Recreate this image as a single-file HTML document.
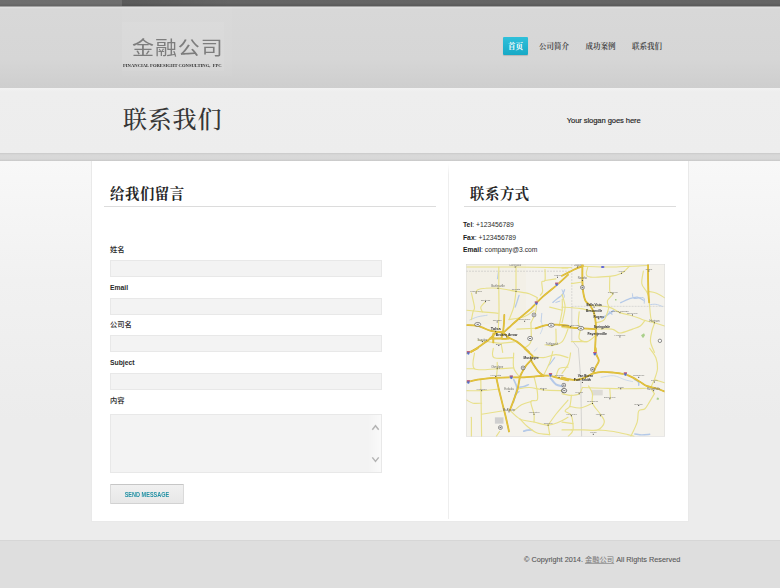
<!DOCTYPE html>
<html lang="zh-CN">
<head>
<meta charset="utf-8">
<title>联系我们 - 金融公司</title>
<style>
*{margin:0;padding:0;box-sizing:border-box;}
html,body{width:780px;height:588px;overflow:hidden;}
body{position:relative;background:#ececec;font-family:"Liberation Sans","Noto Sans CJK SC",sans-serif;color:#222;-webkit-text-size-adjust:none;}
.abs{position:absolute;}
#topbar{left:0;top:0;width:780px;height:7px;background:linear-gradient(#646464 0,#656565 3px,#5d5d5d 5px,#5a5a5a 6px,#9c9c9c 6px,#a8a8a8 7px);}
#topbar2{left:0;top:0;width:122px;height:6px;background:rgba(255,255,255,.07);}
#topbar3{left:122px;top:0;width:110px;height:6px;background:linear-gradient(90deg,rgba(0,0,0,.1),rgba(0,0,0,0));}
#header{left:0;top:7px;width:780px;height:81px;background:linear-gradient(#e1e1e1 0,#d8d8d8 2px,#d6d6d6 52px,#d1d1d1 70px,#cecece 81px);}
#logobox0{left:122px;top:7px;width:110px;height:69px;background:rgba(255,255,255,.035);}
#logobox{left:122px;top:22px;width:101.5px;height:49px;background:rgba(255,255,255,.055);}
#logo{left:132px;top:31px;font-family:"Noto Sans CJK SC","Liberation Sans",sans-serif;font-weight:400;font-size:22px;line-height:30px;color:#7d7d7d;letter-spacing:.9px;white-space:nowrap;transform:scaleY(.86);transform-origin:0 50%;}
#logosub{left:123px;top:62.5px;font-family:"Liberation Serif",serif;font-size:10px;line-height:10px;color:#333;font-weight:700;white-space:nowrap;transform:scale(.462);transform-origin:0 0;letter-spacing:0;}
.nav{top:37px;height:18px;line-height:20px;font-family:"Liberation Serif","Noto Serif CJK SC",serif;font-weight:700;font-size:7.5px;color:#505050;white-space:nowrap;text-align:center;}
#n1{left:503px;width:25px;background:linear-gradient(#2fc0da,#17a9c6);color:#fff;border-radius:1px;box-shadow:0 1px 1px rgba(0,0,0,.15);}
#n2{left:539px;width:30px;}
#n3{left:585px;width:31px;}
#n4{left:632px;width:30px;}
#titleband{left:0;top:88px;width:780px;height:65px;background:linear-gradient(#f2f2f2 0,#eeeeee 4px,#ededed 100%);}
#title{left:123px;top:103.5px;font-family:"Liberation Serif","Noto Serif CJK SC",serif;font-weight:500;font-size:24px;line-height:32px;color:#363636;letter-spacing:.8px;white-space:nowrap;}
#slogan{left:566.8px;top:115.5px;font-size:7.6px;line-height:10px;color:#222;white-space:nowrap;letter-spacing:-.09px;-webkit-text-stroke:.15px #222;}
#strip{left:0;top:153px;width:780px;height:8px;background:linear-gradient(#c9c9c9 0,#d5d5d5 1.5px,#d9d9d9 3px,#d7d7d7 6px,#c8c8c8 8px);}
#main{left:0;top:161px;width:780px;height:379px;background:linear-gradient(#f8f8f8 0,#f1f1f1 120px,#ececec 260px,#ececec 100%);}
#box{left:91px;top:161px;width:598px;height:361px;background:#fff;border:1px solid #e9e9e9;border-top:none;}
#divider{left:448px;top:163px;width:1px;height:356px;background:linear-gradient(#fff 0,#eeeeee 12px,#eeeeee 100%);}
.h2{top:182.4px;font-family:"Liberation Serif","Noto Serif CJK SC",serif;font-weight:700;font-size:14.4px;line-height:24px;color:#262626;letter-spacing:.55px;white-space:nowrap;}
.rule{top:206px;height:1px;background:#dcdcdc;}
.lab{left:110px;font-size:6.8px;line-height:10px;font-weight:700;color:#2a2a2a;white-space:nowrap;}
.lab.cn{font-weight:500;font-size:7.3px;}
.inp{left:110px;width:272px;height:17px;background:#f3f3f3;border:1px solid #e8e8e8;}
#btn{left:110px;top:484px;width:74px;height:20px;border:1px solid #dadada;border-top-color:#c6c6c6;border-bottom-color:#d2d2d2;border-radius:1px;background:linear-gradient(#f0f0f0,#e7e7e7);text-align:center;font-size:7.7px;line-height:19px;font-weight:700;color:#2391a4;white-space:nowrap;}
#btn span{display:inline-block;transform:scaleX(.72);transform-origin:50% 50%;}
.ct{left:463px;font-size:6.75px;line-height:10px;color:#2b2b2b;white-space:nowrap;}
.ct b{color:#1a1a1a;}
#map{left:466px;top:264.1px;width:199px;height:172.5px;filter:blur(.3px);}
#footer{left:0;top:540px;width:780px;height:48px;background:#dedede;border-top:1px solid #d6d6d6;}
#copy{left:524px;top:554.8px;font-size:7.3px;line-height:10px;color:#595959;white-space:nowrap;-webkit-text-stroke:.1px #595959;}
</style>
</head>
<body>
<div id="topbar" class="abs"></div><div id="topbar2" class="abs"></div><div id="topbar3" class="abs"></div>
<div id="header" class="abs"></div>
<div id="logobox0" class="abs"></div><div id="logobox" class="abs"></div>
<div id="logo" class="abs">金融公司</div>
<div id="logosub" class="abs">FINANCIAL FORESIGHT CONSULTING, &nbsp;FPC</div>
<div id="n1" class="abs nav">首页</div>
<div id="n2" class="abs nav">公司简介</div>
<div id="n3" class="abs nav">成功案例</div>
<div id="n4" class="abs nav">联系我们</div>

<div id="titleband" class="abs"></div>
<div id="title" class="abs">联系我们</div>
<div id="slogan" class="abs">Your slogan goes here</div>
<div id="strip" class="abs"></div>

<div id="main" class="abs"></div>
<div id="box" class="abs"></div>
<div id="divider" class="abs"></div>

<div class="abs h2" style="left:110px">给我们留言</div>
<div class="abs rule" style="left:104px;width:332px"></div>

<div class="abs lab cn" style="top:245px">姓名</div>
<div class="abs inp" style="top:260px"></div>
<div class="abs lab" style="top:283px">Email</div>
<div class="abs inp" style="top:298px"></div>
<div class="abs lab cn" style="top:320px">公司名</div>
<div class="abs inp" style="top:335px"></div>
<div class="abs lab" style="top:358px">Subject</div>
<div class="abs inp" style="top:373px"></div>
<div class="abs lab cn" style="top:396px">内容</div>
<div class="abs inp" style="top:414px;height:59px"></div>
<div class="abs" style="left:368px;top:415px;width:13px;height:57px;background:linear-gradient(90deg,rgba(255,255,255,0),rgba(255,255,255,.55))"></div>
<svg class="abs" style="left:371px;top:423px" width="10" height="42" viewBox="0 0 10 42"><path d="M1.3 6.8 L4.5 2.8 L7.7 6.8" fill="none" stroke="#b4b4b4" stroke-width="1.5" stroke-linejoin="miter"/><path d="M1.3 34.4 L4.5 38.4 L7.7 34.4" fill="none" stroke="#b4b4b4" stroke-width="1.5"/></svg>
<div id="btn" class="abs"><span>SEND MESSAGE</span></div>

<div class="abs h2" style="left:470px">联系方式</div>
<div class="abs rule" style="left:464px;width:212px"></div>
<div class="abs ct" style="top:220.4px"><b>Tel</b>: +123456789</div>
<div class="abs ct" style="top:232.8px"><b>Fax</b>: +123456789</div>
<div class="abs ct" style="top:244.8px"><b>Email</b>: company@3.com</div>

<svg id="map" class="abs" viewBox="466 264 199 172" preserveAspectRatio="none">
<rect x="466" y="264" width="199" height="172" fill="#f4f2ec"/>
<rect x="466" y="264" width="60" height="60" fill="#f1efe4" opacity=".6"/>
<rect x="494.9" y="416.9" width="8.6" height="6.3" fill="#cfcfcf"/>
<rect x="591.7" y="389.5" width="11" height="5.5" fill="#dddbd6"/>
<path d="M641 335 l3 -2 l1 2 l-2 3z M657 397 l2 .5 l-.5 2 l-2 -.5z M615 299 l1.5 0 l0 1.5 l-1.5 0z" fill="#a9d08a"/>
<path d="M466 271.2 H572" stroke="#b9b9b9" stroke-width=".5" stroke-dasharray="2 1" fill="none"/>
<path d="M571.8 264 V306.2 H665" stroke="#bdbdbd" stroke-width=".5" stroke-dasharray="2 1" fill="none"/>
<path d="M571.8 306 L571.8 340 L578.4 348 L580.8 379 L581.6 436" stroke="#b5b5b5" stroke-width=".5" fill="none"/>
<g fill="none" stroke="#b4c9e8" stroke-linecap="round" stroke-linejoin="round">
<path d="M519.1 295.2 C518.8 296.2 517.8 299.5 517.1 301.5 C516.5 303.5 515.5 306.1 515.2 307.0" stroke-width="1.28"/>
<path d="M498.3 272.5 L497.4 278.8" stroke-width="0.96"/>
<path d="M552.8 302.3 C553.6 301.6 555.9 299.6 557.5 298.4 C559.1 297.1 561.0 296.2 562.2 294.8 C563.4 293.4 564.2 290.6 564.6 289.7" stroke-width="1.28"/>
<path d="M555.9 302.3 L559.9 301.0" stroke-width="0.96"/>
<path d="M541.8 313.2 L541.1 321.1" stroke-width="0.80"/>
<path d="M469.8 319.8 C471.1 319.3 474.8 317.5 477.7 316.7 C480.6 315.9 485.5 315.4 487.1 315.1" stroke-width="0.72"/>
<path d="M601.9 318.2 C602.8 317.6 605.4 315.8 607.4 314.5 C609.4 313.2 612.7 311.1 613.7 310.4" stroke-width="1.76"/>
<path d="M609.0 311.7 L612.1 314.0" stroke-width="1.20"/>
<path d="M620.7 302.6 C622.1 302.0 626.5 299.6 629.3 298.7 C632.0 297.8 634.9 296.8 637.2 297.0 C639.6 297.2 642.4 299.6 643.4 300.1" stroke-width="1.28"/>
<path d="M632.5 293.7 C632.8 294.5 632.2 297.8 634.0 298.4 C635.8 299.0 641.7 296.8 643.4 297.6 C645.1 298.4 644.1 302.2 644.2 303.1" stroke-width="0.96"/>
<path d="M649.7 304.6 C650.7 304.5 653.8 303.9 655.9 304.2 C658.0 304.5 661.2 305.9 662.2 306.3" stroke-width="0.80"/>
<path d="M562.0 289.7 C562.4 290.8 564.2 294.4 564.3 296.0 C564.4 297.6 563.0 298.6 562.8 299.1" stroke-width="0.96"/>
<path d="M513.7 379.3 C514.2 380.6 516.5 384.5 516.8 387.1 C517.0 389.7 515.8 392.5 515.2 395.0 C514.6 397.5 513.7 400.8 513.4 402.0" stroke-width="1.60"/>
<path d="M516.8 387.1 C517.8 387.0 521.1 386.9 523.1 386.4 C525.1 385.9 527.6 384.6 528.5 384.3" stroke-width="1.44"/>
<path d="M514.5 395.0 L519.1 391.1" stroke-width="1.12"/>
<path d="M550.5 377.7 C551.4 378.8 553.9 382.6 555.9 384.0 C557.9 385.4 561.2 385.6 562.2 385.9" stroke-width="1.92"/>
<path d="M554.7 357.4 C554.1 358.2 552.2 360.8 551.2 362.1 C550.2 363.5 548.9 364.9 548.4 365.5" stroke-width="1.04"/>
<path d="M523.8 430.7 C524.5 430.5 526.5 429.9 527.8 429.7 C529.1 429.5 531.1 429.4 531.7 429.4" stroke-width="1.76"/>
<path d="M634.3 379.0 C635.0 379.4 637.7 380.7 638.4 381.7 C639.1 382.7 638.7 384.4 638.7 385.0" stroke-width="1.44"/>
<path d="M634.8 433.5 C636.0 433.6 639.3 434.3 641.8 434.4 C644.3 434.4 648.4 433.9 649.7 433.8" stroke-width="1.44"/>
<path d="M601.1 377.0 C603.2 376.7 609.8 375.0 613.7 375.4 C617.6 375.8 621.5 378.3 624.6 379.3 C627.7 380.3 631.2 380.9 632.5 381.2" stroke-width=".6"/>
<path d="M534.0 351.1 L537.2 348.0" stroke-width=".6"/>
<path d="M541.1 321.1 C541.4 322.1 542.7 325.2 542.6 327.3 C542.5 329.4 540.7 332.6 540.3 333.6" stroke-width=".6"/>
</g>
<g fill="none" stroke="#e8e08a" stroke-width="1.15" stroke-linecap="round" stroke-linejoin="round">
<path d="M466.7 267.0 C474.8 267.0 498.3 266.9 515.2 267.0 C532.1 267.1 559.2 267.7 568.0 267.8"/>
<path d="M562.0 267.8 L571.4 267.5"/>
<path d="M498.8 267.0 C498.8 270.5 498.8 280.8 498.8 288.2 C498.8 295.6 499.1 304.9 499.0 311.7 C498.9 318.5 498.4 326.0 498.3 328.9"/>
<path d="M516.0 267.0 L516.0 291.3"/>
<path d="M476.1 292.9 C476.4 292.4 476.1 290.5 477.7 289.7 C479.3 288.9 482.1 288.4 485.5 288.2 C488.9 287.9 492.9 287.7 498.0 288.2 C503.1 288.7 510.8 290.4 516.0 291.3 C521.2 292.2 525.8 292.6 529.3 293.7 C532.8 294.8 535.9 297.0 537.2 297.6"/>
<path d="M516.0 291.3 C515.6 293.9 514.9 302.3 513.7 307.0 C512.5 311.7 509.8 317.4 509.0 319.5"/>
<path d="M471.4 292.9 C471.9 295.2 474.2 303.9 474.5 307.0 C474.8 310.1 473.5 309.6 473.0 311.7 C472.5 313.8 471.7 318.2 471.4 319.5"/>
<path d="M466.7 310.1 C469.3 310.4 477.2 311.2 482.4 311.7 C487.6 312.2 495.4 312.9 498.0 313.2"/>
<path d="M485.5 301.5 C484.7 302.4 481.3 305.3 480.8 307.0 C480.3 308.7 482.1 310.9 482.4 311.7"/>
<path d="M545.0 269.4 C545.0 271.2 545.5 278.3 545.0 280.4 C544.5 282.5 542.2 280.1 541.8 281.9 C541.4 283.7 542.9 289.1 542.6 291.3 C542.4 293.5 540.7 294.6 540.3 295.2"/>
<path d="M545.0 280.4 L555.9 278.8"/>
<path d="M562.2 299.1 C562.2 300.9 562.7 305.7 562.2 310.1 C561.7 314.6 559.6 323.2 559.1 325.8"/>
<path d="M530.9 322.6 C530.9 325.7 531.9 337.2 530.9 341.4 C529.9 345.6 525.6 346.6 524.6 347.7"/>
<path d="M555.9 328.9 C555.9 331.2 556.5 340.3 555.9 343.0 C555.2 345.7 552.6 344.9 552.0 345.3"/>
<path d="M516.8 328.9 L535.6 328.1"/>
<path d="M509.0 319.5 C511.6 319.0 520.4 318.0 524.6 316.4 C528.8 314.8 532.4 311.2 534.0 310.1"/>
<path d="M549.7 307.0 L562.2 310.1"/>
<path d="M477.7 339.8 C480.3 340.2 489.4 341.7 493.3 342.2 C497.2 342.7 497.5 343.1 501.1 343.0 C504.8 342.9 512.9 341.7 515.2 341.4"/>
<path d="M501.1 343.0 L502.7 352.1"/>
<path d="M545.0 344.5 C546.2 344.6 549.1 345.8 552.0 345.3 C554.9 344.8 559.5 344.1 562.2 341.4 C564.9 338.7 567.0 331.0 568.0 328.9"/>
<path d="M537.2 297.6 C536.9 300.0 536.7 307.5 535.6 311.7 C534.5 315.9 531.7 320.8 530.9 322.6"/>
<path d="M582.4 266.3 C586.8 266.4 601.2 267.0 609.0 267.0 C616.8 267.0 622.8 266.6 629.3 266.3 C635.8 266.1 645.0 265.6 648.1 265.5"/>
<path d="M587.8 267.0 C587.8 268.6 584.1 274.8 587.8 276.4 C591.5 278.0 604.2 276.9 609.8 276.4 C615.4 275.9 618.2 275.0 621.5 273.3 C624.8 271.6 628.0 267.5 629.3 266.3"/>
<path d="M609.8 276.4 C609.8 278.9 609.3 288.4 609.8 291.3 C610.3 294.2 613.3 292.1 612.9 293.7 C612.5 295.3 608.0 298.5 607.4 300.7 C606.8 302.9 608.7 305.9 609.0 307.0"/>
<path d="M571.4 283.5 L582.4 281.9"/>
<path d="M562.0 307.0 C565.1 307.2 575.3 307.7 580.8 308.5 C586.3 309.3 592.5 311.2 594.9 311.7"/>
<path d="M590.2 305.4 C593.3 305.7 604.0 305.8 609.0 307.0 C614.0 308.2 616.5 311.2 619.9 312.5 C623.3 313.8 626.2 313.9 629.3 314.8 C632.4 315.7 636.1 317.0 638.7 317.9 C641.3 318.8 642.4 319.5 645.0 320.3 C647.6 321.1 652.8 322.2 654.4 322.6"/>
<path d="M595.7 322.6 C597.1 322.1 602.1 322.1 604.3 319.5 C606.5 316.9 608.2 309.1 609.0 307.0"/>
<path d="M595.7 328.9 C598.4 328.9 608.1 328.2 612.1 328.9 C616.1 329.5 616.5 332.8 619.9 332.8 C623.3 332.8 629.1 330.1 632.5 328.9 C635.9 327.7 638.2 327.2 640.3 325.8 C642.4 324.4 644.2 321.2 645.0 320.3"/>
<path d="M649.2 302.3 C649.3 303.1 649.4 304.1 649.7 307.0 C650.0 309.9 650.4 316.9 651.2 319.5 C652.0 322.1 654.3 320.8 654.4 322.6 C654.5 324.4 652.6 327.4 652.0 330.5 C651.4 333.6 650.1 337.8 650.5 341.4 C650.9 345.0 653.8 350.3 654.4 352.1"/>
<path d="M643.4 271.0 C643.1 273.1 641.3 280.1 641.8 283.5 C642.3 286.9 645.4 289.2 646.5 291.3 C647.6 293.4 648.2 295.2 648.6 296.0"/>
<path d="M648.1 291.3 C649.4 291.6 653.1 291.8 655.9 292.9 C658.6 293.9 663.1 296.8 664.6 297.6"/>
<path d="M654.4 322.6 L664.6 325.8"/>
<path d="M562.0 327.3 C563.6 327.4 568.3 328.0 571.4 328.1 C574.5 328.2 579.2 328.1 580.8 328.1"/>
<path d="M579.2 311.7 C579.1 313.5 578.1 319.9 578.4 322.6 C578.7 325.3 580.4 327.2 580.8 328.1"/>
<path d="M580.8 328.1 C580.5 329.8 578.2 336.1 579.2 338.3 C580.2 340.5 584.4 341.9 587.1 341.4 C589.9 340.9 594.3 336.2 595.7 335.2"/>
<path d="M571.4 341.4 L587.1 341.4"/>
<path d="M562.0 294.4 C562.5 296.5 565.1 302.3 565.1 307.0 C565.1 311.7 562.5 320.0 562.0 322.6"/>
<path d="M474.5 352.7 C474.5 355.3 470.7 365.8 474.5 368.4 C478.3 371.0 490.7 368.5 497.2 368.4 C503.7 368.3 511.0 367.7 513.7 367.6"/>
<path d="M497.2 362.1 C497.2 363.2 497.3 365.8 497.2 368.4 C497.1 371.0 496.5 376.1 496.4 377.7"/>
<path d="M466.7 368.4 L474.5 368.4"/>
<path d="M480.8 379.3 L481.6 435.7"/>
<path d="M466.7 390.3 C469.2 390.3 476.2 390.6 481.6 390.3 C487.0 390.0 495.9 389.0 498.8 388.7"/>
<path d="M466.7 399.7 C467.8 400.2 470.5 402.3 473.0 402.8 C475.5 403.3 480.2 402.8 481.6 402.8"/>
<path d="M471.4 416.9 L471.4 435.7"/>
<path d="M481.6 413.8 L501.9 410.6"/>
<path d="M513.7 352.7 C513.7 355.2 512.7 363.6 513.7 367.6 C514.7 371.7 518.9 375.4 519.9 377.0"/>
<path d="M493.3 348.0 C493.4 349.6 490.7 355.8 494.1 357.4 C497.5 359.0 510.4 357.4 513.7 357.4"/>
<path d="M509.8 409.8 C511.5 411.2 515.9 416.5 519.9 418.5 C523.9 420.5 529.3 420.6 534.0 421.6 C538.7 422.6 543.9 424.7 548.1 424.7 C552.3 424.7 555.8 422.9 559.1 421.6 C562.4 420.3 566.5 417.7 568.0 416.9"/>
<path d="M519.9 418.5 C521.2 419.8 524.9 424.0 527.8 426.3 C530.7 428.6 533.6 431.2 537.2 432.5 C540.9 433.8 547.6 433.8 549.7 434.1"/>
<path d="M534.0 376.2 C534.5 378.6 536.7 386.4 537.2 390.3 C537.7 394.2 538.2 397.9 537.2 399.7 C536.2 401.5 531.4 398.8 530.9 401.2 C530.4 403.6 533.5 410.4 534.0 413.8 C534.5 417.2 534.0 420.3 534.0 421.6"/>
<path d="M517.6 388.7 C519.5 388.4 525.0 387.0 529.3 387.1 C533.6 387.2 537.9 389.0 543.4 389.5 C548.9 390.0 559.1 390.2 562.2 390.3"/>
<path d="M530.9 401.2 C529.3 401.7 524.4 402.8 521.5 404.4 C518.6 406.0 515.0 409.6 513.7 410.6"/>
<path d="M552.8 351.1 C552.3 352.9 551.3 358.1 549.7 362.1 C548.1 366.2 544.5 373.2 543.4 375.4"/>
<path d="M532.5 355.8 C534.3 356.1 539.5 357.6 543.4 357.4 C547.3 357.1 551.8 354.3 555.9 354.3 C560.0 354.3 566.0 356.9 568.0 357.4"/>
<path d="M555.9 377.0 C556.4 375.6 557.1 370.1 559.1 368.4 C561.1 366.7 566.5 367.1 568.0 366.8"/>
<path d="M548.1 424.7 L549.7 434.1"/>
<path d="M499.6 431.0 L496.4 435.7"/>
<path d="M568.0 399.7 C566.0 402.1 559.2 409.6 555.9 413.8 C552.6 418.0 549.4 422.9 548.1 424.7"/>
<path d="M570.6 352.7 C570.2 354.5 569.7 360.3 568.3 363.7 C566.9 367.1 563.0 371.5 562.0 373.1"/>
<path d="M649.7 348.0 C650.7 349.6 654.6 354.0 655.9 357.4 C657.2 360.8 657.8 364.8 657.5 368.4 C657.2 372.0 655.4 376.2 654.4 379.3 C653.4 382.4 651.2 384.8 651.2 387.1 C651.2 389.5 653.9 392.3 654.4 393.4"/>
<path d="M582.4 387.1 C585.8 387.2 596.2 387.7 602.7 387.9 C609.2 388.1 614.2 388.4 621.5 388.4 C628.8 388.4 642.3 388.0 646.5 387.9"/>
<path d="M582.4 387.1 C581.9 388.2 581.0 392.1 579.2 393.4 C577.4 394.7 574.3 395.0 571.4 395.0 C568.5 395.0 563.6 393.7 562.0 393.4"/>
<path d="M571.4 395.0 C571.1 396.8 570.8 403.3 569.8 405.9 C568.8 408.5 564.8 409.0 565.1 410.6 C565.4 412.2 570.1 412.2 571.4 415.3 C572.7 418.4 573.5 426.0 573.0 429.4 C572.5 432.8 569.1 434.6 568.3 435.7"/>
<path d="M588.6 385.6 C589.2 386.9 591.9 390.5 592.5 393.4 C593.1 396.3 591.2 399.4 592.5 402.8 C593.8 406.2 598.4 410.7 600.4 413.8 C602.4 416.9 604.7 419.0 604.3 421.6 C603.9 424.2 601.4 428.1 598.0 429.4 C594.6 430.7 588.3 429.4 583.9 429.4 C579.5 429.4 573.5 429.4 571.4 429.4"/>
<path d="M592.5 402.8 C590.5 403.6 584.6 407.0 580.8 407.5 C577.0 408.0 571.6 406.2 569.8 405.9"/>
<path d="M598.0 429.4 C600.6 429.7 608.7 430.2 613.7 431.0 C618.7 431.8 624.4 433.3 627.8 434.1 C631.2 434.9 633.0 435.4 634.0 435.7"/>
<path d="M654.4 393.4 C653.6 394.7 651.3 398.7 649.7 401.2 C648.1 403.7 646.8 406.7 645.0 408.3 C643.2 409.9 640.0 408.4 638.7 410.6 C637.4 412.8 638.5 417.4 637.2 421.6 C635.9 425.8 632.0 433.4 630.9 435.7"/>
<path d="M562.0 429.4 L571.4 429.4"/>
<path d="M562.0 421.6 L573.0 423.2"/>
<path d="M654.4 379.3 L664.6 382.4"/>
<path d="M609.8 388.4 L610.5 398.1"/>
</g>
<g fill="none" stroke="#d9b62e" stroke-width="1.8" stroke-linecap="round" stroke-linejoin="round">
<path d="M568.0 274.9 C566.0 276.7 560.1 282.1 555.9 285.8 C551.7 289.5 546.8 293.0 542.6 296.8 C538.4 300.6 535.2 304.6 530.9 308.5 C526.6 312.4 520.4 317.2 516.8 320.3 C513.1 323.4 511.3 325.3 509.0 327.3 C506.7 329.3 505.0 331.6 503.0 332.3 C501.0 333.0 499.3 330.7 497.2 331.7 C495.1 332.7 492.9 336.0 490.2 338.3 C487.5 340.6 483.9 343.1 480.8 345.3 C477.7 347.5 473.0 350.6 471.4 351.6"/>
<path d="M477.7 348.0 C476.6 348.5 473.2 350.3 471.4 351.1 C469.6 351.9 467.5 352.7 466.7 353.0"/>
<path d="M562.0 275.7 C563.6 274.9 568.8 272.3 571.4 271.0 C574.0 269.7 575.9 268.6 577.7 267.8 C579.5 267.0 581.6 266.9 582.4 266.3 C583.2 265.7 582.4 264.7 582.4 264.4"/>
<path d="M466.7 325.0 C468.5 325.1 473.8 324.9 477.7 325.8 C481.6 326.7 486.9 329.5 490.2 330.5 C493.4 331.5 496.0 331.5 497.2 331.7"/>
<path d="M504.3 314.8 C504.2 316.1 504.2 319.7 504.0 322.6 C503.8 325.5 503.2 330.7 503.0 332.3"/>
<path d="M497.2 331.7 C498.2 331.8 501.0 331.3 503.0 332.3 C505.0 333.3 506.7 336.0 509.0 337.5 C511.3 339.0 514.2 339.7 516.8 341.4 C519.4 343.1 522.5 345.9 524.6 347.7 C526.7 349.5 528.5 351.4 529.3 352.1"/>
<path d="M493.3 333.6 L493.3 342.2"/>
<path d="M503.0 332.3 C502.8 333.3 500.9 337.3 501.9 338.3 C502.9 339.3 507.8 338.3 509.0 338.3"/>
<path d="M490.2 338.3 L501.9 338.3"/>
<path d="M524.6 348.0 C525.4 348.8 528.0 351.4 529.3 352.7 C530.6 354.0 532.2 354.6 532.5 355.8 C532.8 357.0 531.1 358.4 531.2 359.7 C531.3 361.0 532.0 361.7 533.2 363.7 C534.5 365.7 537.0 369.6 538.7 371.5 C540.4 373.4 542.6 374.8 543.4 375.4"/>
<path d="M531.2 359.7 C530.4 360.6 527.7 363.2 526.2 365.2 C524.7 367.2 523.3 369.5 522.3 371.5 C521.2 373.5 520.7 374.1 519.9 377.0 C519.1 379.9 518.6 384.9 517.6 388.7 C516.6 392.5 515.0 396.2 513.7 399.7 C512.4 403.2 510.5 408.1 509.8 409.8"/>
<path d="M535.6 328.1 C537.4 327.6 543.1 325.6 546.5 325.0 C549.9 324.4 552.3 324.4 555.9 324.5 C559.5 324.6 566.0 325.2 568.0 325.4"/>
<path d="M562.0 325.8 C564.1 326.1 571.4 327.2 574.5 327.6 C577.6 328.0 577.4 327.9 580.8 328.1 C584.2 328.3 592.5 328.8 594.9 328.9"/>
<path d="M582.4 264.4 C582.4 267.1 582.3 275.9 582.4 280.4 C582.5 284.9 582.6 287.9 583.1 291.3 C583.6 294.7 584.3 298.4 585.5 300.7 C586.7 303.0 588.8 303.3 590.2 305.4 C591.6 307.5 593.2 310.3 594.1 313.2 C595.0 316.1 595.4 318.9 595.7 322.6 C596.0 326.3 595.8 330.3 595.7 335.2 C595.6 340.1 595.0 349.3 594.9 352.1"/>
<path d="M595.7 348.0 C595.8 349.1 595.9 352.2 596.4 354.3 C596.9 356.4 598.9 358.4 598.8 360.5 C598.7 362.6 596.6 364.7 595.7 366.8 C594.8 368.9 593.7 372.1 593.3 373.1"/>
<path d="M648.1 264.4 C648.1 267.1 648.0 275.1 648.1 280.4 C648.2 285.7 648.4 292.4 648.6 296.0 C648.8 299.6 649.1 301.2 649.2 302.3"/>
<path d="M466.7 381.8 C468.5 381.4 473.8 380.0 477.7 379.3 C481.6 378.6 485.0 378.1 490.2 377.7 C495.4 377.3 503.8 377.1 509.0 377.0 C514.2 376.9 517.3 377.1 521.5 377.0 C525.7 376.9 530.4 376.5 534.0 376.2 C537.6 375.9 540.8 375.5 543.4 375.4 C546.0 375.3 547.6 375.1 549.7 375.4 C551.8 375.7 552.9 376.2 555.9 377.0 C558.9 377.8 566.0 379.6 568.0 380.1"/>
<path d="M562.0 377.0 C563.6 377.4 568.8 378.9 571.4 379.3 C574.0 379.7 575.4 379.7 577.7 379.3 C580.1 378.9 582.9 378.0 585.5 377.0 C588.1 376.0 590.4 374.0 593.3 373.1 C596.2 372.2 599.3 371.6 602.7 371.5 C606.1 371.4 610.1 371.9 613.7 372.3 C617.4 372.7 621.5 373.0 624.6 373.8 C627.7 374.6 629.9 375.7 632.5 377.0 C635.1 378.3 638.0 380.3 640.3 381.7 C642.6 383.1 643.9 384.6 646.5 385.6 C649.1 386.6 652.9 387.0 655.9 387.9 C658.9 388.8 663.1 390.6 664.6 391.1"/>
<path d="M496.4 377.7 C496.8 379.5 497.9 384.8 498.8 388.7 C499.7 392.6 501.0 397.5 501.9 401.2 C502.8 404.9 503.5 407.5 504.3 410.6 C505.1 413.7 505.8 416.6 506.6 420.0 C507.4 423.4 508.6 429.2 509.0 431.0"/>
</g>
<g fill="none" stroke="#e6c846" stroke-width=".8" stroke-linecap="round" stroke-linejoin="round">
<path d="M568.0 274.9 C566.0 276.7 560.1 282.1 555.9 285.8 C551.7 289.5 546.8 293.0 542.6 296.8 C538.4 300.6 535.2 304.6 530.9 308.5 C526.6 312.4 520.4 317.2 516.8 320.3 C513.1 323.4 511.3 325.3 509.0 327.3 C506.7 329.3 505.0 331.6 503.0 332.3 C501.0 333.0 499.3 330.7 497.2 331.7 C495.1 332.7 492.9 336.0 490.2 338.3 C487.5 340.6 483.9 343.1 480.8 345.3 C477.7 347.5 473.0 350.6 471.4 351.6"/>
<path d="M477.7 348.0 C476.6 348.5 473.2 350.3 471.4 351.1 C469.6 351.9 467.5 352.7 466.7 353.0"/>
<path d="M562.0 275.7 C563.6 274.9 568.8 272.3 571.4 271.0 C574.0 269.7 575.9 268.6 577.7 267.8 C579.5 267.0 581.6 266.9 582.4 266.3 C583.2 265.7 582.4 264.7 582.4 264.4"/>
<path d="M466.7 325.0 C468.5 325.1 473.8 324.9 477.7 325.8 C481.6 326.7 486.9 329.5 490.2 330.5 C493.4 331.5 496.0 331.5 497.2 331.7"/>
<path d="M504.3 314.8 C504.2 316.1 504.2 319.7 504.0 322.6 C503.8 325.5 503.2 330.7 503.0 332.3"/>
<path d="M497.2 331.7 C498.2 331.8 501.0 331.3 503.0 332.3 C505.0 333.3 506.7 336.0 509.0 337.5 C511.3 339.0 514.2 339.7 516.8 341.4 C519.4 343.1 522.5 345.9 524.6 347.7 C526.7 349.5 528.5 351.4 529.3 352.1"/>
<path d="M493.3 333.6 L493.3 342.2"/>
<path d="M503.0 332.3 C502.8 333.3 500.9 337.3 501.9 338.3 C502.9 339.3 507.8 338.3 509.0 338.3"/>
<path d="M490.2 338.3 L501.9 338.3"/>
<path d="M524.6 348.0 C525.4 348.8 528.0 351.4 529.3 352.7 C530.6 354.0 532.2 354.6 532.5 355.8 C532.8 357.0 531.1 358.4 531.2 359.7 C531.3 361.0 532.0 361.7 533.2 363.7 C534.5 365.7 537.0 369.6 538.7 371.5 C540.4 373.4 542.6 374.8 543.4 375.4"/>
<path d="M531.2 359.7 C530.4 360.6 527.7 363.2 526.2 365.2 C524.7 367.2 523.3 369.5 522.3 371.5 C521.2 373.5 520.7 374.1 519.9 377.0 C519.1 379.9 518.6 384.9 517.6 388.7 C516.6 392.5 515.0 396.2 513.7 399.7 C512.4 403.2 510.5 408.1 509.8 409.8"/>
<path d="M535.6 328.1 C537.4 327.6 543.1 325.6 546.5 325.0 C549.9 324.4 552.3 324.4 555.9 324.5 C559.5 324.6 566.0 325.2 568.0 325.4"/>
<path d="M562.0 325.8 C564.1 326.1 571.4 327.2 574.5 327.6 C577.6 328.0 577.4 327.9 580.8 328.1 C584.2 328.3 592.5 328.8 594.9 328.9"/>
<path d="M582.4 264.4 C582.4 267.1 582.3 275.9 582.4 280.4 C582.5 284.9 582.6 287.9 583.1 291.3 C583.6 294.7 584.3 298.4 585.5 300.7 C586.7 303.0 588.8 303.3 590.2 305.4 C591.6 307.5 593.2 310.3 594.1 313.2 C595.0 316.1 595.4 318.9 595.7 322.6 C596.0 326.3 595.8 330.3 595.7 335.2 C595.6 340.1 595.0 349.3 594.9 352.1"/>
<path d="M595.7 348.0 C595.8 349.1 595.9 352.2 596.4 354.3 C596.9 356.4 598.9 358.4 598.8 360.5 C598.7 362.6 596.6 364.7 595.7 366.8 C594.8 368.9 593.7 372.1 593.3 373.1"/>
<path d="M648.1 264.4 C648.1 267.1 648.0 275.1 648.1 280.4 C648.2 285.7 648.4 292.4 648.6 296.0 C648.8 299.6 649.1 301.2 649.2 302.3"/>
<path d="M466.7 381.8 C468.5 381.4 473.8 380.0 477.7 379.3 C481.6 378.6 485.0 378.1 490.2 377.7 C495.4 377.3 503.8 377.1 509.0 377.0 C514.2 376.9 517.3 377.1 521.5 377.0 C525.7 376.9 530.4 376.5 534.0 376.2 C537.6 375.9 540.8 375.5 543.4 375.4 C546.0 375.3 547.6 375.1 549.7 375.4 C551.8 375.7 552.9 376.2 555.9 377.0 C558.9 377.8 566.0 379.6 568.0 380.1"/>
<path d="M562.0 377.0 C563.6 377.4 568.8 378.9 571.4 379.3 C574.0 379.7 575.4 379.7 577.7 379.3 C580.1 378.9 582.9 378.0 585.5 377.0 C588.1 376.0 590.4 374.0 593.3 373.1 C596.2 372.2 599.3 371.6 602.7 371.5 C606.1 371.4 610.1 371.9 613.7 372.3 C617.4 372.7 621.5 373.0 624.6 373.8 C627.7 374.6 629.9 375.7 632.5 377.0 C635.1 378.3 638.0 380.3 640.3 381.7 C642.6 383.1 643.9 384.6 646.5 385.6 C649.1 386.6 652.9 387.0 655.9 387.9 C658.9 388.8 663.1 390.6 664.6 391.1"/>
<path d="M496.4 377.7 C496.8 379.5 497.9 384.8 498.8 388.7 C499.7 392.6 501.0 397.5 501.9 401.2 C502.8 404.9 503.5 407.5 504.3 410.6 C505.1 413.7 505.8 416.6 506.6 420.0 C507.4 423.4 508.6 429.2 509.0 431.0"/>
</g>
<path d="M555.1 282.6 h3.2 v1.6 q0 1.6 -1.6 2.1 q-1.6 -.5 -1.6 -2.1z" fill="#5470c8" stroke="#fff" stroke-width=".3"/><rect x="555.1" y="282.6" width="3.2" height="1" fill="#d8505a"/>
<path d="M534.8 301.40000000000003 h3.2 v1.6 q0 1.6 -1.6 2.1 q-1.6 -.5 -1.6 -2.1z" fill="#5470c8" stroke="#fff" stroke-width=".3"/><rect x="534.8" y="301.40000000000003" width="3.2" height="1" fill="#d8505a"/>
<path d="M466.7 380.0 h3.2 v1.6 q0 1.6 -1.6 2.1 q-1.6 -.5 -1.6 -2.1z" fill="#5470c8" stroke="#fff" stroke-width=".3"/><rect x="466.7" y="380.0" width="3.2" height="1" fill="#d8505a"/>
<path d="M509.7 375.3 h3.2 v1.6 q0 1.6 -1.6 2.1 q-1.6 -.5 -1.6 -2.1z" fill="#5470c8" stroke="#fff" stroke-width=".3"/><rect x="509.7" y="375.3" width="3.2" height="1" fill="#d8505a"/>
<path d="M548.9 372.90000000000003 h3.2 v1.6 q0 1.6 -1.6 2.1 q-1.6 -.5 -1.6 -2.1z" fill="#5470c8" stroke="#fff" stroke-width=".3"/><rect x="548.9" y="372.90000000000003" width="3.2" height="1" fill="#d8505a"/>
<path d="M466.7 351.0 h3.2 v1.6 q0 1.6 -1.6 2.1 q-1.6 -.5 -1.6 -2.1z" fill="#5470c8" stroke="#fff" stroke-width=".3"/><rect x="466.7" y="351.0" width="3.2" height="1" fill="#d8505a"/>
<path d="M593.3 351.8 h3.2 v1.6 q0 1.6 -1.6 2.1 q-1.6 -.5 -1.6 -2.1z" fill="#5470c8" stroke="#fff" stroke-width=".3"/><rect x="593.3" y="351.8" width="3.2" height="1" fill="#d8505a"/>
<path d="M623.8 372.1 h3.2 v1.6 q0 1.6 -1.6 2.1 q-1.6 -.5 -1.6 -2.1z" fill="#5470c8" stroke="#fff" stroke-width=".3"/><rect x="623.8" y="372.1" width="3.2" height="1" fill="#d8505a"/>
<rect x="532.3" y="313.1" width="3.4" height="3.4" rx="1" fill="#fff" stroke="#333" stroke-width=".55"/><rect x="533.1999999999999" y="314.2" width="1.5999999999999999" height="1.2" fill="#777"/>
<rect x="580.6999999999999" y="285.7" width="3.4" height="3.4" rx="1" fill="#fff" stroke="#333" stroke-width=".55"/><rect x="581.5999999999999" y="286.79999999999995" width="1.5999999999999999" height="1.2" fill="#777"/>
<rect x="521.4" y="365.90000000000003" width="3.4" height="3.4" rx="1" fill="#fff" stroke="#333" stroke-width=".55"/><rect x="522.3" y="367.0" width="1.5999999999999999" height="1.2" fill="#777"/>
<rect x="498.7" y="425.40000000000003" width="3.4" height="3.4" rx="1" fill="#fff" stroke="#333" stroke-width=".55"/><rect x="499.59999999999997" y="426.5" width="1.5999999999999999" height="1.2" fill="#777"/>
<rect x="562.0999999999999" y="383.1" width="3.4" height="3.4" rx="1" fill="#fff" stroke="#333" stroke-width=".55"/><rect x="562.9999999999999" y="384.2" width="1.5999999999999999" height="1.2" fill="#777"/>
<rect x="590.8" y="367.40000000000003" width="3.4" height="3.4" rx="1" fill="#fff" stroke="#333" stroke-width=".55"/><rect x="591.6999999999999" y="368.5" width="1.5999999999999999" height="1.2" fill="#777"/>
<ellipse cx="477.7" cy="324.2" rx="3.0" ry="1.9" fill="#fff" stroke="#333" stroke-width=".55"/><rect x="476.59999999999997" y="323.65" width="2.2" height="1.1" fill="#777"/>
<ellipse cx="551.2" cy="325.0" rx="3.0" ry="1.9" fill="#fff" stroke="#333" stroke-width=".55"/><rect x="550.1" y="324.45" width="2.2" height="1.1" fill="#777"/>
<ellipse cx="580.8" cy="328.1" rx="3.0" ry="1.9" fill="#fff" stroke="#333" stroke-width=".55"/><rect x="579.6999999999999" y="327.55" width="2.2" height="1.1" fill="#777"/>
<ellipse cx="530.1" cy="338.3" rx="2.4" ry="2.1" fill="#fff" stroke="#333" stroke-width=".55"/><rect x="529.0" y="337.75" width="2.2" height="1.1" fill="#777"/>
<ellipse cx="563.8" cy="390.3" rx="2.4" ry="2.1" fill="#fff" stroke="#333" stroke-width=".55"/><rect x="562.6999999999999" y="389.75" width="2.2" height="1.1" fill="#777"/>
<ellipse cx="564.3" cy="390.3" rx="2.4" ry="2.1" fill="#fff" stroke="#333" stroke-width=".55"/><rect x="563.1999999999999" y="389.75" width="2.2" height="1.1" fill="#777"/>
<circle cx="659.9" cy="340.6" r="1.7" fill="#fff" stroke="#444" stroke-width=".6"/>
<ellipse cx="602.7" cy="267.0" rx="1.8" ry="1" fill="#5a62d8"/>
<g font-family="Liberation Sans, sans-serif" text-anchor="middle">
<rect x="495.2" y="330.7" width="1" height="1" fill="#444"/>
<text x="495.7" y="330.2" font-size="3.90" fill="#2a2a2a" font-weight="700">Tulsa</text>
<rect x="506.1" y="336.2" width="1" height="1" fill="#444"/>
<text x="506.6" y="335.7" font-size="3.30" fill="#2a2a2a" font-weight="700">Broken Arrow</text>
<rect x="497.5" y="287.7" width="1" height="1" fill="#444"/>
<text x="498.0" y="287.2" font-size="2.80" fill="#6a6a64">Bartlesville</text>
<rect x="514.7" y="266.5" width="1" height="1" fill="#444"/>
<text x="515.2" y="266.0" font-size="2.66" fill="#6a6a64">Coffeyville</text>
<rect x="475.6" y="292.4" width="1" height="1" fill="#444"/>
<text x="476.1" y="291.9" font-size="2.52" fill="#6a6a64">Pawhuska</text>
<rect x="485.0" y="301.0" width="1" height="1" fill="#444"/>
<text x="485.5" y="300.5" font-size="2.52" fill="#6a6a64">Skiatook</text>
<rect x="481.9" y="340.9" width="1" height="1" fill="#444"/>
<text x="482.4" y="340.4" font-size="2.66" fill="#6a6a64">Sapulpa</text>
<rect x="498.3" y="344.8" width="1" height="1" fill="#444"/>
<text x="498.8" y="344.3" font-size="2.52" fill="#6a6a64">Bixby</text>
<rect x="551.5" y="344.8" width="1" height="1" fill="#444"/>
<text x="552.0" y="344.3" font-size="2.66" fill="#6a6a64">Tahlequah</text>
<rect x="557.0" y="276.7" width="1" height="1" fill="#444"/>
<text x="557.5" y="276.2" font-size="2.52" fill="#6a6a64">Miami</text>
<rect x="515.5" y="290.8" width="1" height="1" fill="#444"/>
<text x="516.0" y="290.3" font-size="2.52" fill="#6a6a64">Nowata</text>
<rect x="496.7" y="321.3" width="1" height="1" fill="#444"/>
<text x="497.2" y="320.8" font-size="2.52" fill="#6a6a64">Owasso</text>
<rect x="524.1" y="320.6" width="1" height="1" fill="#444"/>
<text x="524.6" y="320.1" font-size="2.52" fill="#6a6a64">Claremore</text>
<rect x="593.6" y="306.5" width="1" height="1" fill="#444"/>
<text x="594.1" y="306.0" font-size="3.00" fill="#2a2a2a" font-weight="700">Bella Vista</text>
<rect x="593.6" y="312.7" width="1" height="1" fill="#444"/>
<text x="594.1" y="312.2" font-size="3.00" fill="#2a2a2a" font-weight="700">Bentonville</text>
<rect x="598.3" y="318.2" width="1" height="1" fill="#444"/>
<text x="598.8" y="317.7" font-size="3.00" fill="#2a2a2a" font-weight="700">Rogers</text>
<rect x="601.4" y="328.1" width="1" height="1" fill="#444"/>
<text x="601.9" y="327.6" font-size="3.15" fill="#2a2a2a" font-weight="700">Springdale</text>
<rect x="596.7" y="335.0" width="1" height="1" fill="#444"/>
<text x="597.2" y="334.5" font-size="3.60" fill="#2a2a2a" font-weight="700">Fayetteville</text>
<rect x="581.9" y="279.9" width="1" height="1" fill="#444"/>
<text x="582.4" y="279.4" font-size="2.66" fill="#6a6a64">Neosho</text>
<rect x="653.9" y="322.1" width="1" height="1" fill="#444"/>
<text x="654.4" y="321.6" font-size="2.66" fill="#6a6a64">Harrison</text>
<rect x="619.4" y="312.0" width="1" height="1" fill="#444"/>
<text x="619.9" y="311.5" font-size="2.52" fill="#6a6a64">Eureka Springs</text>
<rect x="612.4" y="293.2" width="1" height="1" fill="#444"/>
<text x="612.9" y="292.7" font-size="2.52" fill="#6a6a64">Cassville</text>
<rect x="648.4" y="270.5" width="1" height="1" fill="#444"/>
<text x="648.9" y="270.0" font-size="2.52" fill="#6a6a64">Ozark</text>
<rect x="621.0" y="272.8" width="1" height="1" fill="#444"/>
<text x="621.5" y="272.3" font-size="2.52" fill="#6a6a64">Aurora</text>
<rect x="619.4" y="336.2" width="1" height="1" fill="#444"/>
<text x="619.9" y="335.7" font-size="2.52" fill="#6a6a64">Huntsville</text>
<rect x="570.1" y="326.0" width="1" height="1" fill="#444"/>
<text x="570.6" y="325.5" font-size="2.52" fill="#6a6a64">Siloam Springs</text>
<rect x="632.0" y="314.3" width="1" height="1" fill="#444"/>
<text x="632.5" y="313.8" font-size="2.52" fill="#6a6a64">Berryville</text>
<rect x="577.2" y="266.5" width="1" height="1" fill="#444"/>
<text x="577.7" y="266.0" font-size="2.80" fill="#6a6a64">Joplin</text>
<rect x="530.7" y="359.2" width="1" height="1" fill="#444"/>
<text x="531.2" y="358.7" font-size="3.15" fill="#2a2a2a" font-weight="700">Muskogee</text>
<rect x="496.7" y="367.9" width="1" height="1" fill="#444"/>
<text x="497.2" y="367.4" font-size="2.66" fill="#6a6a64">Okmulgee</text>
<rect x="508.5" y="410.9" width="1" height="1" fill="#444"/>
<text x="509.0" y="410.4" font-size="2.80" fill="#6a6a64">McAlester</text>
<rect x="508.5" y="390.6" width="1" height="1" fill="#444"/>
<text x="509.0" y="390.1" font-size="2.80" fill="#6a6a64">Eufaula</text>
<rect x="481.1" y="389.8" width="1" height="1" fill="#444"/>
<text x="481.6" y="389.3" font-size="2.38" fill="#6a6a64">Wetumka</text>
<rect x="533.5" y="413.3" width="1" height="1" fill="#444"/>
<text x="534.0" y="412.8" font-size="2.52" fill="#6a6a64">Wilburton</text>
<rect x="547.6" y="424.2" width="1" height="1" fill="#444"/>
<text x="548.1" y="423.7" font-size="2.52" fill="#6a6a64">Talihina</text>
<rect x="542.9" y="389.0" width="1" height="1" fill="#444"/>
<text x="543.4" y="388.5" font-size="2.52" fill="#6a6a64">Stigler</text>
<rect x="558.6" y="376.5" width="1" height="1" fill="#444"/>
<text x="559.1" y="376.0" font-size="2.52" fill="#6a6a64">Sallisaw</text>
<rect x="495.2" y="375.7" width="1" height="1" fill="#444"/>
<text x="495.7" y="375.2" font-size="2.52" fill="#6a6a64">Henryetta</text>
<rect x="581.9" y="381.6" width="1" height="1" fill="#444"/>
<text x="582.4" y="381.1" font-size="3.45" fill="#2a2a2a" font-weight="700">Fort Smith</text>
<rect x="585.0" y="377.2" width="1" height="1" fill="#444"/>
<text x="585.5" y="376.7" font-size="3.15" fill="#2a2a2a" font-weight="700">Van Buren</text>
<rect x="620.2" y="387.9" width="1" height="1" fill="#444"/>
<text x="620.7" y="387.4" font-size="2.52" fill="#6a6a64">Paris</text>
<rect x="653.1" y="389.8" width="1" height="1" fill="#444"/>
<text x="653.6" y="389.3" font-size="2.66" fill="#6a6a64">Russellville</text>
<rect x="638.2" y="376.5" width="1" height="1" fill="#444"/>
<text x="638.7" y="376.0" font-size="2.52" fill="#6a6a64">Clarksville</text>
<rect x="592.0" y="402.6" width="1" height="1" fill="#444"/>
<text x="592.5" y="402.1" font-size="2.52" fill="#6a6a64">Mansfield</text>
<rect x="599.9" y="414.8" width="1" height="1" fill="#444"/>
<text x="600.4" y="414.3" font-size="2.52" fill="#6a6a64">Waldron</text>
<rect x="609.3" y="397.9" width="1" height="1" fill="#444"/>
<text x="609.8" y="397.4" font-size="2.52" fill="#6a6a64">Booneville</text>
<rect x="570.9" y="414.8" width="1" height="1" fill="#444"/>
<text x="571.4" y="414.3" font-size="2.52" fill="#6a6a64">Heavener</text>
<rect x="578.7" y="392.9" width="1" height="1" fill="#444"/>
<text x="579.2" y="392.4" font-size="2.38" fill="#6a6a64">Pocola</text>
<rect x="653.9" y="381.2" width="1" height="1" fill="#444"/>
<text x="654.4" y="380.7" font-size="2.38" fill="#6a6a64">Dover</text>
<rect x="638.2" y="404.6" width="1" height="1" fill="#444"/>
<text x="638.7" y="404.1" font-size="2.38" fill="#6a6a64">Danville</text>
<rect x="592.8" y="433.3" width="1" height="1" fill="#444"/>
<text x="593.3" y="432.8" font-size="2.52" fill="#6a6a64">Mena</text>
</g>
<rect x="466.25" y="264.25" width="198.5" height="171.5" fill="none" stroke="#d9d9d9" stroke-width=".5"/>
</svg>

<div id="footer" class="abs"></div>
<div id="copy" class="abs">© Copyright 2014. <span style="text-decoration:underline;text-decoration-color:#a0a0a0;color:#787878;-webkit-text-stroke:0">金融公司</span> All Rights Reserved</div>
</body>
</html>
